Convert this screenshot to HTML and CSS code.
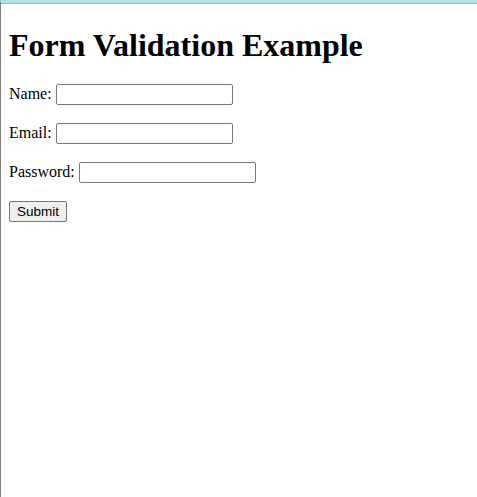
FILE: index.html
```html
<!DOCTYPE html>
<html>
<head>
<meta charset="utf-8">
<title>Form Validation Example</title>
<link rel="stylesheet" href="styles.css">
</head>
<body>
<h1 class="title">Form Validation Example</h1>
<form class="form">
  <p class="row"><label class="label" for="name">Name:</label> <input class="field" type="text" id="name"></p>
  <p class="row"><label class="label" for="email">Email:</label> <input class="field" type="email" id="email"></p>
  <p class="row"><label class="label" for="password">Password:</label> <input class="field" type="password" id="password"></p>
  <p class="row"><button class="submit" type="submit">Submit</button></p>
</form>
</body>
</html>
```
FILE: styles.css
```css
html {
  margin: 0;
  padding: 0;
  min-height: 100%;
  box-sizing: border-box;
  border-top: 3px solid #b3dfe4;
  border-left: 1px solid #7f7f7f;
  box-shadow: inset 0 1px 0 #8fb9be;
  background: #ffffff;
}
body {
  margin: 8px;
  font-family: "Liberation Serif", "Times New Roman", serif;
  font-size: 16px;
  color: #000;
}
.title {
  font-size: 32px;
  font-weight: bold;
  margin: 16px 0 19px;
}
.form {
  margin: 0;
}
.row {
  margin: 16px 0;
}
.field {
  box-sizing: border-box;
  width: 177px;
  height: 21px;
  margin: 1px 0;
  padding: 1px 2px;
  border: 1px solid #767676;
  border-radius: 2px;
  font-family: "Liberation Sans", Arial, sans-serif;
  font-size: 13.33px;
  vertical-align: baseline;
  background: #fff;
}
.submit {
  box-sizing: border-box;
  height: 21px;
  margin: 1px 0;
  padding: 1px 7px;
  border: 1px solid #767676;
  border-radius: 2px;
  background: #efefef;
  font-family: "Liberation Sans", Arial, sans-serif;
  font-size: 13.5px;
  color: #000;
}
```
